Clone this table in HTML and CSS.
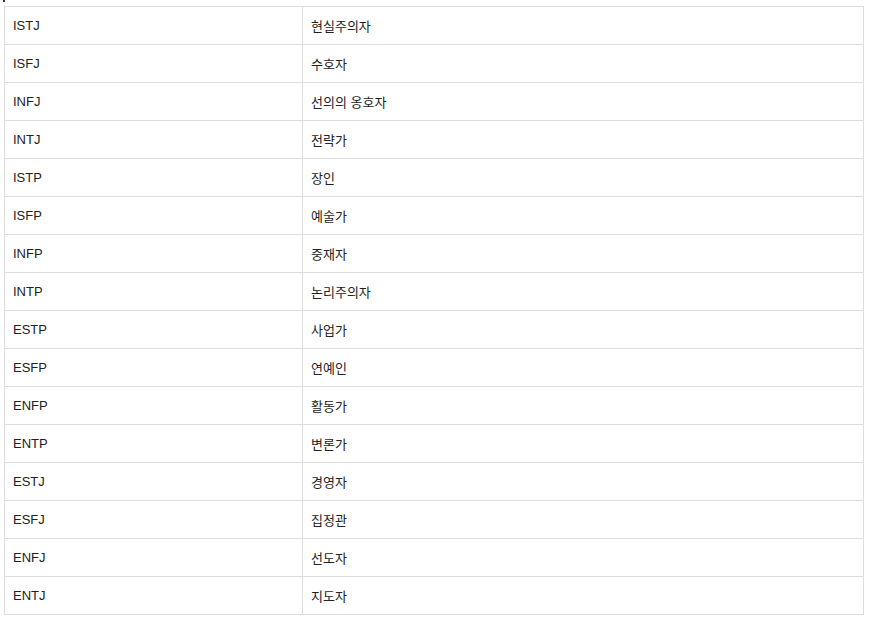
FILE: index.html
```html
<!DOCTYPE html>
<html lang="ko">
<head>
<meta charset="utf-8">
<link rel="stylesheet" href="styles.css">
</head>
<body>
<div class="page">
<span class="mark"></span>
<table class="mbti">
<tbody>
<tr><td>ISTJ</td><td>현실주의자</td></tr>
<tr><td>ISFJ</td><td>수호자</td></tr>
<tr><td>INFJ</td><td>선의의 옹호자</td></tr>
<tr><td>INTJ</td><td>전략가</td></tr>
<tr><td>ISTP</td><td>장인</td></tr>
<tr><td>ISFP</td><td>예술가</td></tr>
<tr><td>INFP</td><td>중재자</td></tr>
<tr><td>INTP</td><td>논리주의자</td></tr>
<tr><td>ESTP</td><td>사업가</td></tr>
<tr><td>ESFP</td><td>연예인</td></tr>
<tr><td>ENFP</td><td>활동가</td></tr>
<tr><td>ENTP</td><td>변론가</td></tr>
<tr><td>ESTJ</td><td>경영자</td></tr>
<tr><td>ESFJ</td><td>집정관</td></tr>
<tr><td>ENFJ</td><td>선도자</td></tr>
<tr><td>ENTJ</td><td>지도자</td></tr>
</tbody>
</table>
</div>
</body>
</html>
```
FILE: styles.css
```css
html, body {
  margin: 0;
  padding: 0;
  background: #fff;
}
.page {
  position: relative;
  padding: 6px 6px 0 4px;
  font-family: "Liberation Sans", Arial, "Noto Sans CJK KR", sans-serif;
  font-size: 13px;
  color: #222;
}
.mark {
  position: absolute;
  left: 3px;
  top: 0;
  width: 2px;
  height: 2px;
  background: #333;
}
.mbti {
  width: 860px;
  border-collapse: collapse;
  table-layout: fixed;
}
.mbti td {
  border: 1px solid #ddd;
  height: 38px;
  padding: 0 8px;
  box-sizing: border-box;
  vertical-align: middle;
}
.mbti td:first-child {
  width: 298px;
}
```
